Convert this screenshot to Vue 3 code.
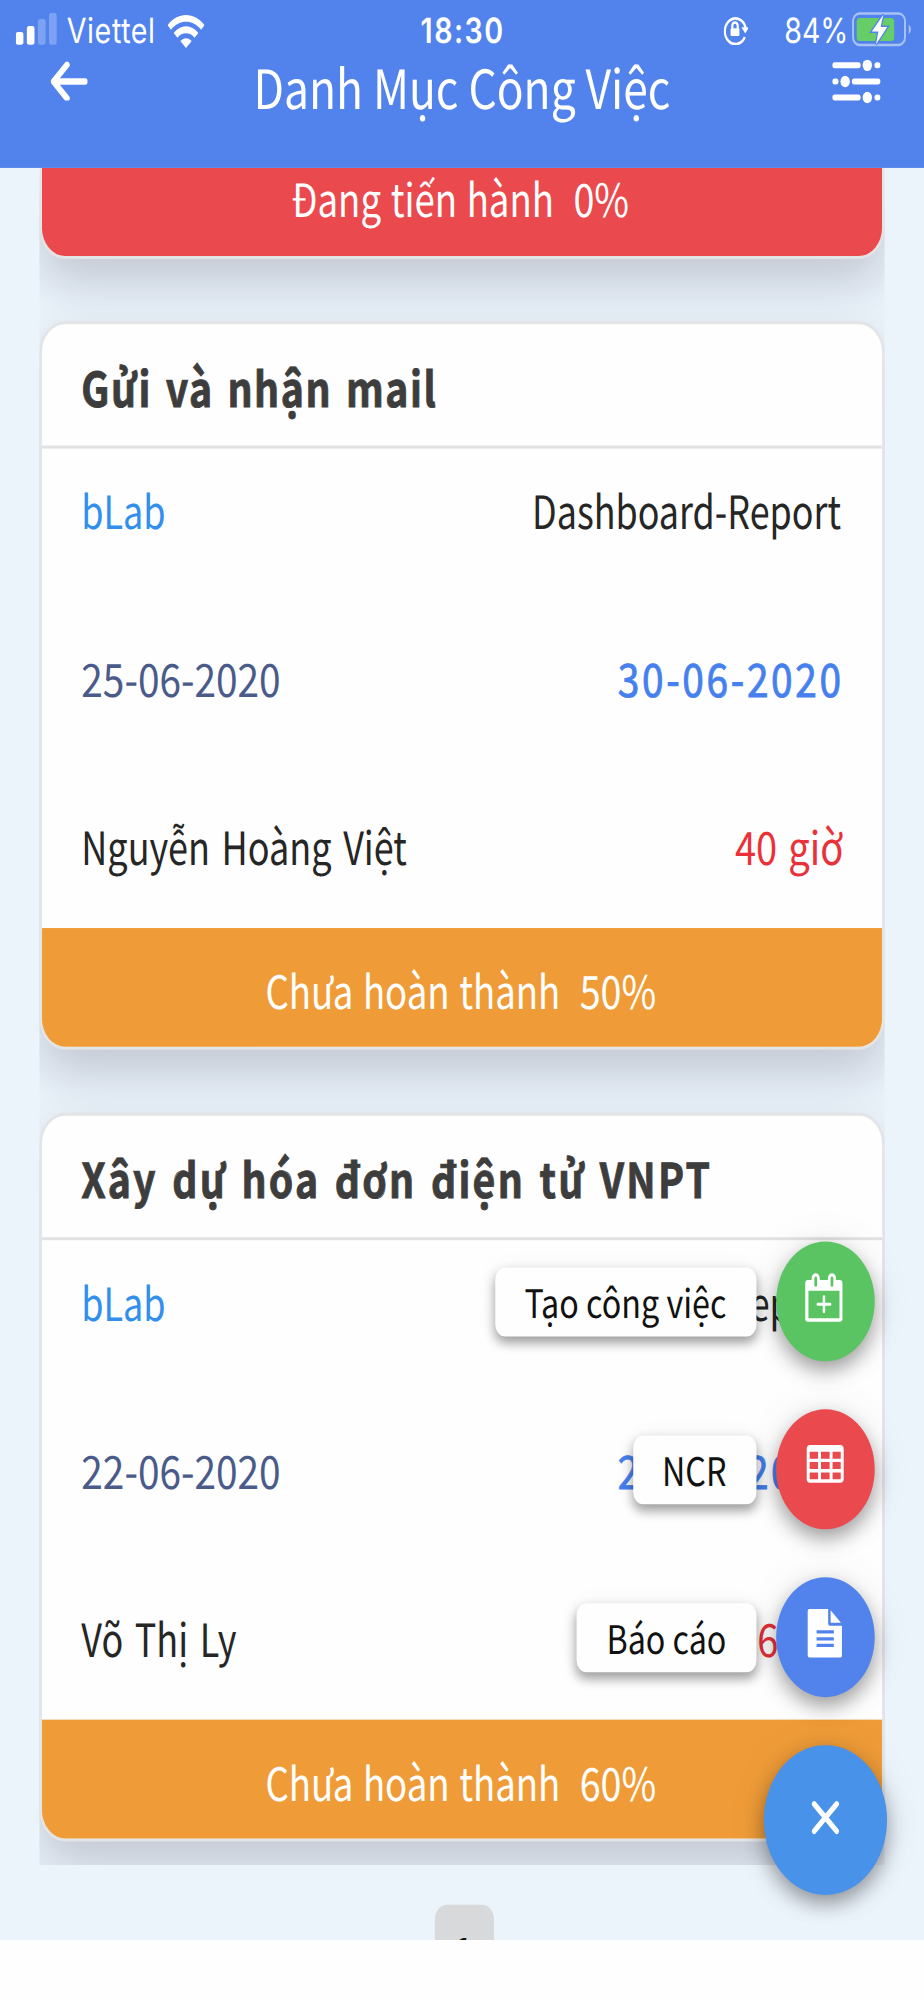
<script setup>
const tasks = [
  {
    title: 'Gửi và nhận mail',
    group: 'bLab',
    project: 'Dashboard-Report',
    start: '25-06-2020',
    end: '30-06-2020',
    person: 'Nguyễn Hoàng Việt',
    hours: '40 giờ',
    status: 'Chưa hoàn thành',
    percent: 50,
  },
  {
    title: 'Xây dự hóa đơn điện tử VNPT',
    group: 'bLab',
    project: 'Dashboard-Report',
    start: '22-06-2020',
    end: '26-06-2020',
    person: 'Võ Thị Ly',
    hours: '6 giờ',
    status: 'Chưa hoàn thành',
    percent: 60,
  },
]
</script>

<template>
  <div class="screen">
    <header class="header">
      <div class="status-bar">
        <svg class="signal" viewBox="0 0 17 11">
          <rect x="0" y="6.4" width="3.1" height="4.2" rx="0.9" />
          <rect x="4.5" y="4.4" width="3.1" height="6.2" rx="0.9" />
          <rect x="9" y="2" width="3.1" height="8.6" rx="0.9" opacity="0.25" />
          <rect x="13.5" y="0" width="3.1" height="10.6" rx="0.9" opacity="0.25" />
        </svg>
        <span class="carrier">Viettel</span>
        <svg class="wifi" viewBox="0 0 15 11">
          <path d="M0 3.4C4.1-1.1 10.9-1.1 15 3.4L13.6 4.9C10.2 1.4 4.8 1.4 1.4 4.9Z" />
          <path d="M2.5 6C5.3 3 9.7 3 12.5 6L11 7.6C9.1 5.6 5.9 5.6 4 7.6Z" />
          <path d="M5.2 8.7C6.5 7.4 8.5 7.4 9.8 8.7L7.5 11Z" />
        </svg>
        <span class="clock">18:30</span>
        <svg class="rotation-lock" viewBox="0 0 10.4 10">
          <path d="M8.7 7.4A4.3 4.3 0 1 1 9 4.2" class="ring" />
          <path d="M7.3 4.1H10.4L8.9 6.2Z" />
          <rect x="2.9" y="4.4" width="3.6" height="2.6" rx="0.4" />
          <path d="M3.6 4.6V3.6A1.1 1.1 0 0 1 5.8 3.6V4.6" class="shackle" />
        </svg>
        <span class="battery-level">84%</span>
        <svg class="battery" viewBox="0 0 24 12">
          <rect x="0.4" y="0.5" width="21.1" height="10.5" rx="2.6" class="shell" />
          <path d="M23 4.2Q23.9 4.7 23.9 5.8T23 7.4Z" opacity="0.5" />
          <rect x="1.9" y="2" width="15.2" height="7.7" rx="1.2" class="charge" />
          <path d="M12.7 0.9L8 6.5H10.7L9.7 10.8L14.3 5H11.6Z" class="bolt" />
        </svg>
      </div>
      <svg class="back" viewBox="0 0 15 13.4">
        <path d="M6.6 1.1L1.1 6.7L6.6 12.3M1.3 6.7H13.9" />
      </svg>
      <h1 class="title">Danh Mục Công Việc</h1>
      <svg class="filter" viewBox="0 0 20 15">
        <path d="M1.1 2.1H10.6M18.2 2.1H18.6M1.1 7.5H1.6M9 7.5H18.6M1.1 12.8H10.6M18.2 12.8H18.6" />
        <circle cx="14.3" cy="2.1" r="1.9" />
        <circle cx="5.3" cy="7.5" r="1.9" />
        <circle cx="14.3" cy="12.8" r="1.9" />
      </svg>
    </header>

    <main class="content">
      <div class="list">
        <article class="card card-tail">
          <footer class="card-footer danger">
            <span class="status">Đang tiến hành</span>
            <span>0%</span>
          </footer>
        </article>
        <article v-for="task in tasks" :key="task.title" class="card">
          <h2 class="card-title" :class="{ long: task.title.length > 20 }">{{ task.title }}</h2>
          <div class="row">
            <span class="group">{{ task.group }}</span>
            <span class="project">{{ task.project }}</span>
          </div>
          <div class="row">
            <span class="start">{{ task.start }}</span>
            <span class="end">{{ task.end }}</span>
          </div>
          <div class="row">
            <span class="person">{{ task.person }}</span>
            <span class="hours">{{ task.hours }}</span>
          </div>
          <footer class="card-footer">
            <span class="status">{{ task.status }}</span>
            <span>{{ task.percent }}%</span>
          </footer>
        </article>
      </div>
      <div class="pager"><span>1</span></div>
    </main>

    <nav class="actions">
      <div class="action">
        <span class="label">Tạo công việc</span>
        <button class="fab green">
          <svg viewBox="0 0 40 40">
            <path
              fill-rule="evenodd"
              d="M12.9 12.9H14.4V12.3A1.65 1.65 0 0 1 17.7 12.3V12.9H21V12.3A1.65 1.65 0 0 1 24.3 12.3V12.9H25.8Q26.9 12.9 26.9 14V25.7Q26.9 26.8 25.8 26.8H12.9Q11.8 26.8 11.8 25.7V14Q11.8 12.9 12.9 12.9ZM13.1 16.5V25.6H25.7V16.5ZM15.5 12.3V14.6A.55 .55 0 0 0 16.6 14.6V12.3A.55 .55 0 0 0 15.5 12.3ZM22.1 12.3V14.6A.55 .55 0 0 0 23.2 14.6V12.3A.55 .55 0 0 0 22.1 12.3Z"
            />
            <path d="M19.4 18.5V23.5M16.9 21H21.9" class="plus" />
          </svg>
        </button>
      </div>
      <div class="action">
        <span class="label">NCR</span>
        <button class="fab red">
          <svg viewBox="0 0 40 40">
            <path
              fill-rule="evenodd"
              d="M13.8 11.9H26Q27.4 11.9 27.4 13.2V23.2Q27.4 24.5 26 24.5H13.8Q12.4 24.5 12.4 23.2V13.2Q12.4 11.9 13.8 11.9ZM13.6 14.2V16.5H17V14.2ZM18.2 14.2V16.5H21.7V14.2ZM22.9 14.2V16.5H26.2V14.2ZM13.6 17.6V19.9H17V17.6ZM18.2 17.6V19.9H21.7V17.6ZM22.9 17.6V19.9H26.2V17.6ZM13.6 21.1V23.3H17V21.1ZM18.2 21.1V23.3H21.7V21.1ZM22.9 21.1V23.3H26.2V21.1Z"
            />
          </svg>
        </button>
      </div>
      <div class="action">
        <span class="label">Báo cáo</span>
        <button class="fab blue">
          <svg viewBox="0 0 40 40">
            <path
              fill-rule="evenodd"
              d="M13.5 10.6H21.1V15.4Q21.1 16.2 21.9 16.2H26.7V26.1Q26.7 26.8 26 26.8H13.5Q12.8 26.8 12.8 26.1V11.3Q12.8 10.6 13.5 10.6ZM16.4 17.7V18.8H23.4V17.7ZM16.4 20V21.1H23.4V20ZM16.4 22.2V23.3H23.4V22.2Z"
            />
            <path d="M22.1 11L26.3 15.2H22.1Z" />
          </svg>
        </button>
      </div>
      <button class="fab main">
        <svg viewBox="0 0 50 50">
          <path d="M20.4 19.6L29.6 28.7M29.6 19.6L20.4 28.7" class="cross" />
        </svg>
      </button>
    </nav>
  </div>
</template>

<style>
html,
body {
  margin: 0;
  background: #fefefe;
}

#app {
  width: 924px;
  height: 2000px;
  overflow: hidden;
}
</style>

<style scoped>
/* A 375 x 667 point phone layout stretched over a 924 x 2000 canvas. */
.screen {
  position: relative;
  width: 375px;
  height: 667px;
  overflow: hidden;
  transform: scale(2.464, 2.9985);
  transform-origin: 0 0;
  background: #fefefe;
  font-family: 'Noto Sans CJK SC', 'Noto Sans', sans-serif;
  text-rendering: geometricPrecision;
  color: #262626;
}

svg {
  display: block;
  fill: #fff;
  flex: none;
}

.header {
  position: relative;
  box-sizing: border-box;
  height: 56px;
  background: #5283ec;
  color: #fff;
}

.status-bar {
  display: flex;
  align-items: flex-start;
  height: 19.3px;
  padding-left: 6.3px;
  font: 400 11.6px/14px Inter, sans-serif;
}

.signal {
  width: 17px;
  height: 11px;
  margin-top: 4.4px;
  transform: translate(0.4px, 0.3px);
}

.carrier {
  width: 36px;
  margin: 3px 0 0 3.8px;
  letter-spacing: 0.25px;
  white-space: nowrap;
  transform: translateY(0.45px);
}

.wifi {
  width: 15px;
  height: 11px;
  margin: 4.6px 0 0 4.6px;
}

.clock {
  width: 34px;
  margin: 3px 0 0 88px;
  font-weight: 600;
  letter-spacing: 0.6px;
  white-space: nowrap;
  transform: translateY(0.45px);
}

.rotation-lock {
  width: 10.4px;
  height: 10px;
  margin: 5.2px 0 0 89px;
  transform: translateX(-0.4px);
}

.ring,
.shackle {
  fill: none;
  stroke: #fff;
  stroke-width: 0.9;
}

.battery-level {
  width: 27px;
  margin: 3px 0 0 14.2px;
  white-space: nowrap;
  transform: translateY(0.45px);
}

.battery {
  width: 24px;
  height: 12px;
  margin: 3.7px 0 0 0.1px;
  transform: translateX(0.8px);
}

.shell {
  fill: none;
  stroke: #fff;
  stroke-opacity: 0.5;
  stroke-width: 0.8;
}

.charge {
  fill: #67cd67;
}

.bolt {
  stroke: #5283ec;
  stroke-width: 1;
  paint-order: stroke;
}

.back {
  position: absolute;
  left: 20px;
  top: 20px;
  width: 15px;
  height: 13.4px;
  transform: translate(0.6px, 0.5px);
}

.back path,
.filter path {
  fill: none;
  stroke: #fff;
  stroke-width: 2.2;
  stroke-linecap: round;
  stroke-linejoin: round;
}

.filter {
  position: absolute;
  left: 337px;
  top: 20px;
  width: 20px;
  height: 15px;
  transform: translate(0.7px, -0.3px);
}

.filter path {
  stroke-width: 2;
}

.title {
  margin: 0;
  font-size: 18px;
  font-weight: 400;
  line-height: 20px;
  text-align: center;
  transform: translateY(0.2px);
}

.content {
  height: 591px;
  overflow: hidden;
  background: #ebf3fb;
}

.list {
  display: flow-root;
  box-sizing: border-box;
  height: 565.9px;
  margin: 0 16px;
  overflow: hidden;
}

.card {
  box-sizing: border-box;
  height: 243.8px;
  margin-bottom: 20.2px;
  border: 1px solid #e3e4e5;
  border-radius: 10.5px;
  overflow: hidden;
  background: #fefefe;
  box-shadow: 0 8px 18px rgba(20, 15, 40, 0.19);
  display: flex;
  flex-direction: column;
  transform: translateY(0.1px);
}

/* Bottom part of a card scrolled under the header. */
.card-tail {
  height: 31.3px;
  margin-top: -1px;
  margin-bottom: 20.3px;
  border-top: 0;
  border-radius: 0 0 10.5px 10.5px;
  transform: translateY(0.4px);
}

.card-title {
  flex: none;
  box-sizing: border-box;
  height: 41.8px;
  margin: 0;
  padding: 10.8px 16px 0;
  border-bottom: 1px solid #e1e2e2;
  font-size: 15.9px;
  font-weight: 700;
  line-height: 22px;
  letter-spacing: 0.65px;
  word-spacing: 1.3px;
  -webkit-text-stroke: 0.3px #3d3d3d;
  color: #3d3d3d;
  white-space: nowrap;
  transform: translateY(0.5px);
}

.long {
  letter-spacing: 0.93px;
}

.row {
  flex: none;
  display: flex;
  justify-content: space-between;
  height: 56px;
  padding: 9.5px 16px 0;
  box-sizing: border-box;
  font-size: 15.3px;
  line-height: 22px;
  white-space: nowrap;
  transform: translateY(0.4px);
}

.row:nth-of-type(3) {
  height: 48px;
}

.group,
.person,
.start {
  transform-origin: 0 50%;
  transform: scaleX(0.955);
}

.project,
.hours,
.end {
  transform-origin: 100% 50%;
  transform: translateX(-0.4px) scaleX(0.952);
}

.group {
  color: #318fee;
}

.person {
  word-spacing: 1.5px;
}

.start {
  color: #4a5b8a;
  transform: scaleX(1.03);
}

.end {
  color: #4680ee;
  letter-spacing: 1.05px;
  margin-right: -0.6px;
  transform: translateX(-0.6px) scaleX(1.03);
  -webkit-text-stroke: 0.3px #4680ee;
}

.hours {
  color: #ea313a;
  word-spacing: 1px;
  margin-right: -0.6px;
  transform: translateX(-0.3px) scaleX(1.01);
}

.card-footer {
  flex: none;
  height: 40px;
  margin-top: auto;
  padding: 10px 4.8px 0 0;
  box-sizing: border-box;
  display: flex;
  justify-content: center;
  gap: 8px;
  background: #ef9c38;
  color: #fff;
  font-size: 15.3px;
  line-height: 22px;
  text-align: center;
  transform: translateY(0.4px);
}

.status {
  word-spacing: 0.6px;
  transform-origin: 100% 50%;
  transform: scaleX(0.97);
}

.danger {
  height: 30.3px;
  padding-top: 0;
  background: #ea494e;
  transform: none;
}

.pager {
  display: flex;
  justify-content: center;
  width: 24px;
  height: 24px;
  margin: 13.6px auto 0;
  padding-top: 5px;
  border-radius: 5px;
  background: #d8d9da;
  color: #111;
  font-size: 13px;
  font-weight: 700;
  line-height: 20px;
  transform: translate(0.5px, 0.2px);
}

.pager span {
  transform: translateY(0.3px);
}

.actions {
  position: absolute;
  right: 15px;
  top: 414px;
  display: flex;
  flex-direction: column;
  align-items: flex-end;
  gap: 16px;
}

.action {
  display: flex;
  align-items: center;
  gap: 8.2px;
  margin-right: 5px;
}

.label {
  height: 23px;
  padding: 0 12px;
  border-radius: 4px;
  background: #fefefe;
  box-shadow: 0 2px 4px rgba(0, 0, 0, 0.36), 0 0 8px rgba(0, 0, 0, 0.05);
  color: #111;
  font-size: 13.1px;
  line-height: 23.4px;
  white-space: nowrap;
  transform: translateY(-0.3px);
}

.fab {
  width: 40px;
  height: 40px;
  padding: 0;
  border: 0;
  border-radius: 50%;
  box-shadow: 0 3px 7px rgba(0, 0, 0, 0.36), 0 0 16px rgba(0, 0, 0, 0.07);
}

.fab svg {
  width: 100%;
  height: 100%;
}

.green {
  background: #5ac463;
}

.red {
  background: #ea494e;
}

.blue {
  background: #5283ec;
}

.main {
  width: 50px;
  height: 50px;
  background: #4892ea;
}

.plus {
  stroke: #fff;
  stroke-width: 1;
  stroke-linecap: round;
}

.cross {
  stroke: #fff;
  stroke-width: 1.9;
  stroke-linecap: round;
}
</style>
